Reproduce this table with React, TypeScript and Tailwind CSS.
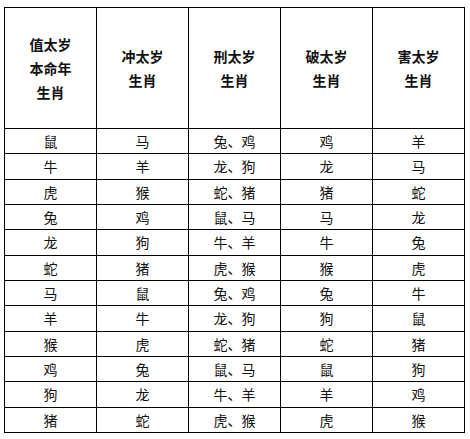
const headers = [
  ["值太岁", "本命年", "生肖"],
  ["冲太岁", "生肖"],
  ["刑太岁", "生肖"],
  ["破太岁", "生肖"],
  ["害太岁", "生肖"],
]

const rows = [
  ["鼠", "马", "兔、鸡", "鸡", "羊"],
  ["牛", "羊", "龙、狗", "龙", "马"],
  ["虎", "猴", "蛇、猪", "猪", "蛇"],
  ["兔", "鸡", "鼠、马", "马", "龙"],
  ["龙", "狗", "牛、羊", "牛", "兔"],
  ["蛇", "猪", "虎、猴", "猴", "虎"],
  ["马", "鼠", "兔、鸡", "兔", "牛"],
  ["羊", "牛", "龙、狗", "狗", "鼠"],
  ["猴", "虎", "蛇、猪", "蛇", "猪"],
  ["鸡", "兔", "鼠、马", "鼠", "狗"],
  ["狗", "龙", "牛、羊", "羊", "鸡"],
  ["猪", "蛇", "虎、猴", "虎", "猴"],
]

export default function App() {
  return (
    <div
      className="w-[470px] h-[439px] bg-white pl-[4px] pt-[7px] text-[#111]"
      style={{ fontFamily: '"Noto Sans CJK SC", "Noto Sans", sans-serif' }}
    >
      <table className="w-[461px] table-fixed border-collapse text-[14px]">
        <thead>
          <tr className="h-[121px]">
            {headers.map((lines, i) => (
              <th key={i} className="border border-black font-bold align-middle p-0">
                {lines.map((l) => (
                  <div key={l} className="leading-[24px]">
                    {l}
                  </div>
                ))}
              </th>
            ))}
          </tr>
        </thead>
        <tbody>
          {rows.map((row, r) => (
            <tr key={r} className="h-[25.33px]">
              {row.map((cell, c) => (
                <td key={c} className="border border-black text-center align-middle p-0 leading-[24px]">
                  {cell}
                </td>
              ))}
            </tr>
          ))}
        </tbody>
      </table>
    </div>
  )
}
